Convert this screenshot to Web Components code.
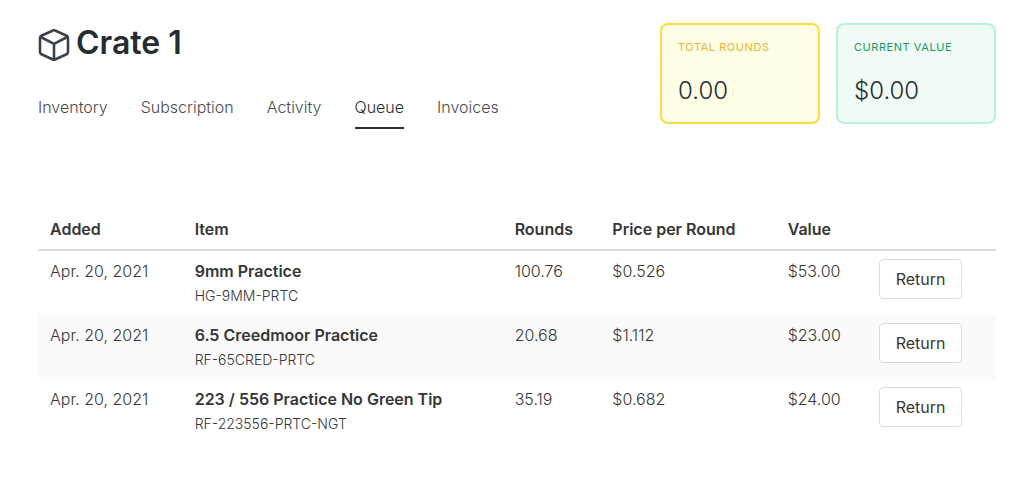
<!DOCTYPE html>
<html lang="en">
<head>
<meta charset="utf-8">
<meta name="viewport" content="width=device-width, initial-scale=1">
<title>Crate 1 – Queue</title>
<style>
  body {
    margin: 0;
    background: #fff;
    color: #363636;
    font: 300 16px/24px Inter, "Liberation Sans", sans-serif;
  }
</style>
</head>
<body>
<crate-page></crate-page>

<template id="page-template">
  <style>
    :host { display: block; padding: 23px 22px 40px 38px; }
    header { display: flex; justify-content: space-between; align-items: flex-start; gap: 24px; }
    .stats { display: flex; gap: 16px; }
    queue-table { margin-top: 80px; }
  </style>
  <header>
    <div>
      <crate-title>Crate 1</crate-title>
      <tab-bar>
        <tab-link>Inventory</tab-link>
        <tab-link>Subscription</tab-link>
        <tab-link>Activity</tab-link>
        <tab-link current>Queue</tab-link>
        <tab-link>Invoices</tab-link>
      </tab-bar>
    </div>
    <div class="stats">
      <stat-card tone="yellow"><span slot="label">Total Rounds</span>0.00</stat-card>
      <stat-card tone="green"><span slot="label">Current Value</span>$0.00</stat-card>
    </div>
  </header>
  <main><queue-table></queue-table></main>
</template>

<template id="title-template">
  <style>
    :host { display: block; }
    h1 { display: flex; align-items: center; gap: 6px; margin: 0; color: #252d33; font-size: 32px; line-height: 40px; font-weight: 600; }
    svg { display: block; width: 32px; height: 32px; margin-top: 4px; flex: none; }
  </style>
  <h1>
    <svg viewBox="0 0 32 32" fill="none" stroke="#3b4248" stroke-width="2.6" stroke-linecap="round" stroke-linejoin="round" aria-hidden="true">
      <path d="M17.6 1.7 28.6 6.7A3 3 0 0 1 30 9.2V22.8A3 3 0 0 1 28.6 25.3L17.6 30.3A3.4 3.4 0 0 1 14.4 30.3L3.4 25.3A3 3 0 0 1 2 22.8V9.2A3 3 0 0 1 3.4 6.7L14.4 1.7A3.4 3.4 0 0 1 17.6 1.7Z"/>
      <path d="M2.8 8 16 14.8 29.2 8M16 14.8V30.3"/>
    </svg>
    <slot></slot>
  </h1>
</template>

<template id="tabs-template">
  <style>
    :host { display: block; margin-top: 32px; }
    nav { display: flex; gap: 33px; }
  </style>
  <nav aria-label="Crate sections"><slot></slot></nav>
</template>

<template id="tab-template">
  <style>
    :host { display: block; }
    a { display: block; padding-bottom: 8px; border-bottom: 2px solid transparent; color: #4a4a4a; text-decoration: none; white-space: nowrap; }
    :host([current]) a { color: #252d33; border-color: #252d33; }
  </style>
  <a href="#"><slot></slot></a>
</template>

<template id="stat-template">
  <style>
    :host { display: block; box-sizing: border-box; width: 160px; padding: 14px 16px 13px; border: 2px solid; border-radius: 8px; }
    :host([tone="yellow"]) { background: #fffde6; border-color: #fddc3f; --label: #eab530; }
    :host([tone="green"]) { background: #f0fbf6; border-color: #b7f2d6; --label: #149a62; }
    .label { color: var(--label); font-size: 11px; line-height: 16px; font-weight: 400; letter-spacing: 0.05em; text-transform: uppercase; white-space: nowrap; }
    .value { margin-top: 18px; color: #252d33; font-size: 24px; line-height: 36px; }
  </style>
  <div class="label"><slot name="label"></slot></div>
  <div class="value"><slot></slot></div>
</template>

<template id="table-template">
  <style>
    :host { display: block; }
    table { width: 100%; table-layout: fixed; border-collapse: separate; border-spacing: 0; }
    th, td { padding: 8px 12px; text-align: left; vertical-align: top; }
    th { border-bottom: 2px solid #dbdbdb; font-weight: 600; white-space: nowrap; }
    td { height: 48px; }
    tbody tr:nth-child(even) { background: #fafafa; }
    strong { display: block; font-weight: 600; }
    small { font-size: 14px; line-height: 20px; }
    .added { width: 15.1%; }
    .item { width: 33.4%; }
    .rounds { width: 10.2%; }
    .price { width: 18.3%; }
    .value { width: 9.5%; }
    .action { width: 13.5%; }
  </style>
  <table>
    <colgroup>
      <col class="added"><col class="item"><col class="rounds"><col class="price"><col class="value"><col class="action">
    </colgroup>
    <thead>
      <tr><th scope="col">Added</th><th scope="col">Item</th><th scope="col">Rounds</th><th scope="col">Price per Round</th><th scope="col">Value</th><th></th></tr>
    </thead>
    <tbody>
      <tr><td>Apr. 20, 2021</td><td><strong>9mm Practice</strong><small>HG-9MM-PRTC</small></td><td>100.76</td><td>$0.526</td><td>$53.00</td><td><return-button>Return</return-button></td></tr>
      <tr><td>Apr. 20, 2021</td><td><strong>6.5 Creedmoor Practice</strong><small>RF-65CRED-PRTC</small></td><td>20.68</td><td>$1.112</td><td>$23.00</td><td><return-button>Return</return-button></td></tr>
      <tr><td>Apr. 20, 2021</td><td><strong>223 / 556 Practice No Green Tip</strong><small>RF-223556-PRTC-NGT</small></td><td>35.19</td><td>$0.682</td><td>$24.00</td><td><return-button>Return</return-button></td></tr>
    </tbody>
  </table>
</template>

<template id="button-template">
  <style>
    :host { display: block; }
    button { display: block; margin: 0; padding: 7px 16px; border: 1px solid #dbdbdb; border-radius: 4px; background: #fff; color: #363636; font: inherit; font-weight: 400; line-height: 24px; cursor: pointer; }
  </style>
  <button type="button"><slot></slot></button>
</template>

<script>
  function define(name, templateId) {
    customElements.define(name, class extends HTMLElement {
      constructor() {
        super();
        const template = document.getElementById(templateId);
        this.attachShadow({ mode: "open" }).append(template.content.cloneNode(true));
      }
    });
  }
  define("crate-title", "title-template");
  define("tab-bar", "tabs-template");
  define("tab-link", "tab-template");
  define("stat-card", "stat-template");
  define("return-button", "button-template");
  define("queue-table", "table-template");
  define("crate-page", "page-template");
</script>
</body>
</html>
